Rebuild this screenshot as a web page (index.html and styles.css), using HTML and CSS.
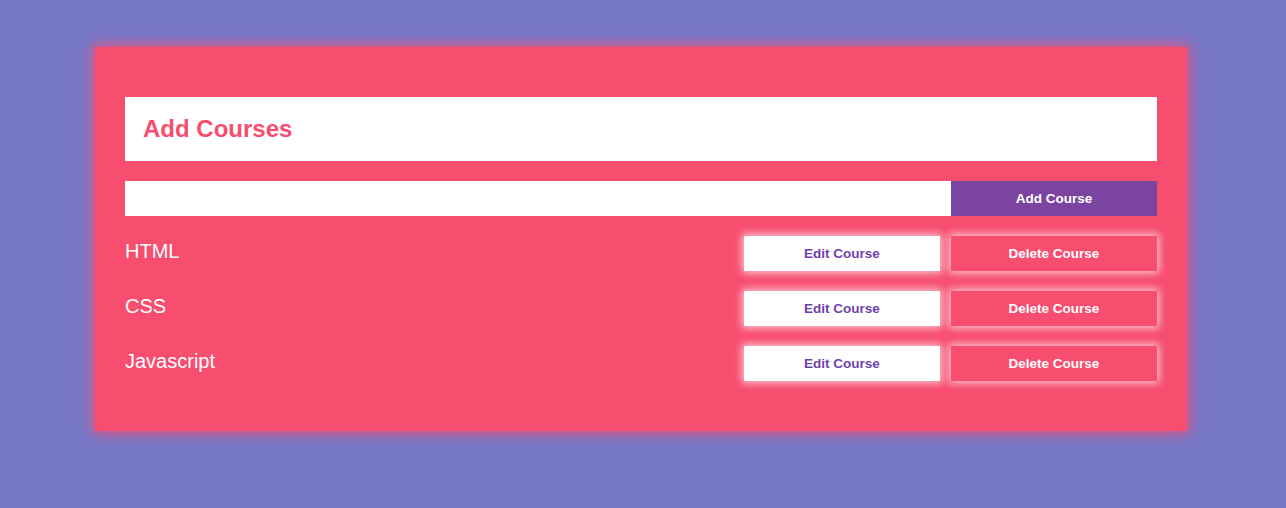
FILE: index.html
```html
<!DOCTYPE html>
<html>
<head>
<meta charset="utf-8">
<link rel="stylesheet" href="styles.css">
</head>
<body>
<div class="card">
  <div class="header"><h1 class="title">Add Courses</h1></div>
  <div class="add-row">
    <input class="course-input" type="text">
    <button class="btn btn-add">Add Course</button>
  </div>
  <div class="list">
    <div class="item">
      <span class="name">HTML</span>
      <div class="actions">
        <button class="btn btn-edit">Edit Course</button>
        <button class="btn btn-delete">Delete Course</button>
      </div>
    </div>
    <div class="item">
      <span class="name">CSS</span>
      <div class="actions">
        <button class="btn btn-edit">Edit Course</button>
        <button class="btn btn-delete">Delete Course</button>
      </div>
    </div>
    <div class="item">
      <span class="name">Javascript</span>
      <div class="actions">
        <button class="btn btn-edit">Edit Course</button>
        <button class="btn btn-delete">Delete Course</button>
      </div>
    </div>
  </div>
</div>
</body>
</html>
```
FILE: styles.css
```css
* { box-sizing: border-box; }
html, body { margin: 0; padding: 0; }
body {
  background: #7878c8;
  font-family: "Liberation Sans", Arial, sans-serif;
  padding: 47px 99px 0 95px;
  height: 508px;
  overflow: hidden;
}
.card {
  width: 1092px;
  height: 384px;
  background: #f74d6f;
  box-shadow: 0 0 12px 2px rgba(247, 77, 111, 0.9);
  padding: 50px 30px;
  display: flex;
  flex-direction: column;
  gap: 20px;
}
.header {
  background: #fff;
  height: 64px;
  display: flex;
  align-items: center;
  padding-left: 18px;
}
.title {
  margin: 0;
  color: #f74d6f;
  font-size: 24px;
  font-weight: bold;
}
.add-row {
  display: flex;
  height: 35px;
}
.course-input {
  flex: 1;
  border: none;
  outline: none;
  margin: 0;
  padding: 0 10px;
  height: 35px;
  background: #fff;
}
.btn {
  font-family: "Liberation Sans", Arial, sans-serif;
  font-size: 13.5px;
  font-weight: bold;
  border: none;
  height: 35px;
  margin: 0;
  padding: 0;
  cursor: pointer;
}
.btn-add {
  width: 206px;
  background: #7a44a0;
  color: #fff;
}
.list {
  display: flex;
  flex-direction: column;
  gap: 20px;
}
.item {
  display: flex;
  align-items: center;
  justify-content: space-between;
  height: 35px;
}
.name {
  color: #fff;
  font-size: 20px;
  margin-top: -5px;
}
.actions {
  display: flex;
  gap: 11px;
}
.btn-edit {
  width: 196px;
  background: #fff;
  color: #6f3fb0;
  box-shadow: 0 0 8px 2px rgba(255, 255, 255, 0.7);
}
.btn-delete {
  width: 206px;
  background: #f74d6f;
  color: #fff;
  box-shadow: 0 0 8px 2px rgba(255, 255, 255, 0.7);
}
```
